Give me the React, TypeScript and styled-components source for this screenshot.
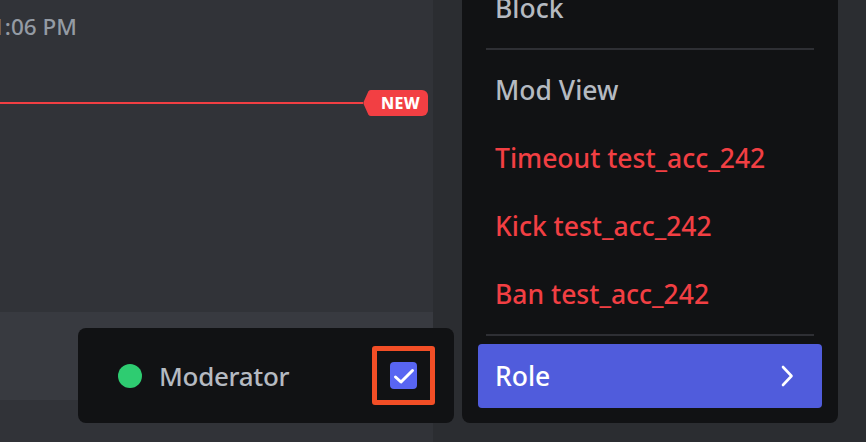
import React from "react";
import styled, { createGlobalStyle } from "styled-components";

const Global = createGlobalStyle`
  html, body { margin: 0; padding: 0; background: #313338; }
  body { font-family: "Noto Sans", "Open Sans", sans-serif; }
`;

const Screen = styled.div`
  position: relative;
  width: 866px;
  height: 442px;
  overflow: hidden;
  display: flex;
  background: #313338;
`;

const Chat = styled.div`
  flex: 0 0 433px;
  display: flex;
  flex-direction: column;
  background: #313338;
`;

const Members = styled.div`
  flex: 1;
  background: #2b2d31;
`;

const Timestamp = styled.div`
  margin: 11px 0 0 -8px;
  height: 32px;
  font-size: 22.5px;
  line-height: 32px;
  color: #949ba4;
  font-weight: 500;
`;

const Divider = styled.div`
  margin-top: 47px;
  height: 26px;
  display: flex;
  align-items: center;
  width: 428px;
`;

const RedLine = styled.div`
  flex: 1;
  height: 2px;
  background: #f23f43;
`;

const NewBadge = styled.div`
  height: 26px;
  display: flex;
  align-items: center;
  padding: 0 8px 0 6px;
  background: #f23f43;
  border-radius: 0 6px 6px 0;
  color: #fff;
  font-weight: 800;
  font-size: 16px;
  letter-spacing: 0.3px;
`;

const BadgeTip = styled.svg`
  display: block;
  flex: none;
`;

const Spacer = styled.div`
  flex: 1;
`;

const InputBar = styled.div`
  height: 88px;
  margin: 0 -22px 42px 0;
  background: #383a40;
  border-radius: 0 10px 10px 0;
`;

const Menu = styled.div`
  position: absolute;
  left: 462px;
  top: -42px;
  width: 344px;
  padding: 16px 16px 13px;
  background: #111214;
  border-radius: 8px;
  display: flex;
  flex-direction: column;
`;

const Item = styled.div<{ $tone?: "normal" | "danger" | "active" }>`
  height: 64px;
  margin: 2px 0;
  padding: 0 28px 0 17px;
  display: flex;
  align-items: center;
  justify-content: space-between;
  border-radius: 4px;
  font-size: 26.5px;
  font-weight: 500;
  color: ${(p) =>
    p.$tone === "danger" ? "#f23f43" : p.$tone === "active" ? "#ffffff" : "#b5bac1"};
  background: ${(p) => (p.$tone === "active" ? "#505cdc" : "transparent")};
`;

const Separator = styled.div`
  height: 2px;
  margin: 6px 8px;
  background: #2e2f34;
`;

const RolePopup = styled.div`
  position: absolute;
  left: 78px;
  top: 328px;
  width: 376px;
  height: 95px;
  box-sizing: border-box;
  padding: 0 18px 0 40px;
  background: #111214;
  border-radius: 8px;
  display: flex;
  align-items: center;
`;

const Dot = styled.div<{ $color: string }>`
  width: 24px;
  height: 24px;
  border-radius: 50%;
  background: ${(p) => p.$color};
  flex: none;
`;

const RoleName = styled.div`
  flex: 1;
  margin-left: 17px;
  font-size: 26px;
  font-weight: 500;
  letter-spacing: -0.3px;
  color: #b5bac1;
`;

const Highlight = styled.div`
  width: 63px;
  height: 59px;
  box-sizing: border-box;
  border: 5px solid #f24e26;
  border-radius: 3px;
  display: flex;
  align-items: center;
  justify-content: center;
  margin-right: 1px;
`;

const Checkbox = styled.div`
  width: 27px;
  height: 27px;
  border-radius: 4px;
  background: #5865f2;
  display: flex;
  align-items: center;
  justify-content: center;
`;

export default function App() {
  return (
    <Screen>
      <Global />
      <Chat>
        <Timestamp>1:06 PM</Timestamp>
        <Divider>
          <RedLine />
          <BadgeTip width="12" height="26" viewBox="0 0 12 26">
            <path d="M12.5 0 H8 Q6.5 0 5.4 1.2 L0.8 11.6 Q0 13 0.8 14.4 L5.4 24.8 Q6.5 26 8 26 H12.5 Z" fill="#f23f43" />
          </BadgeTip>
          <NewBadge>NEW</NewBadge>
        </Divider>
        <Spacer />
        <InputBar />
      </Chat>
      <Members />
      <Menu>
        <Item>Block</Item>
        <Separator />
        <Item>Mod View</Item>
        <Item $tone="danger">Timeout test_acc_242</Item>
        <Item $tone="danger">Kick test_acc_242</Item>
        <Item $tone="danger">Ban test_acc_242</Item>
        <Separator />
        <Item $tone="active">
          Role
          <svg width="14" height="24" viewBox="0 0 14 24">
            <path d="M3 3 L11.5 12 L3 21" fill="none" stroke="#fff" strokeWidth="2.6" strokeLinecap="round" strokeLinejoin="round" />
          </svg>
        </Item>
      </Menu>
      <RolePopup>
        <Dot $color="#2ecc71" />
        <RoleName>Moderator</RoleName>
        <Highlight>
          <Checkbox>
            <svg width="24" height="24" viewBox="0 0 24 24">
              <path d="M3.5 13 L9 18 L20.5 6.5" fill="none" stroke="#fff" strokeWidth="3" strokeLinecap="round" strokeLinejoin="round" />
            </svg>
          </Checkbox>
        </Highlight>
      </RolePopup>
    </Screen>
  );
}
